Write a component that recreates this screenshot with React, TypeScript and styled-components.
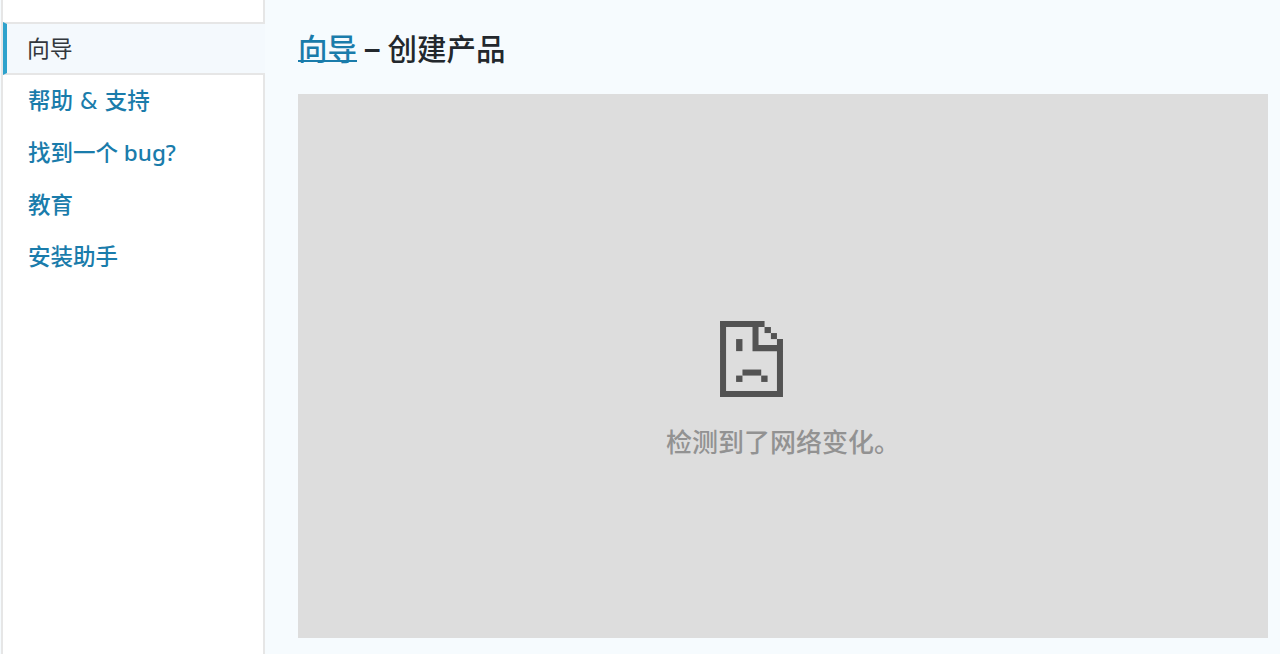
import styled, { createGlobalStyle } from "styled-components";

const GlobalStyle = createGlobalStyle`
  html, body {
    margin: 0;
    height: 100%;
    overflow: hidden;
    background: #f6fbfe;
    font-family: "Noto Sans", "Noto Sans CJK SC", sans-serif;
  }
  #root {
    height: 100%;
  }
`;

const Page = styled.div`
  display: flex;
  height: 654px;
  padding-left: 1px;
`;

const Sidebar = styled.nav`
  display: flex;
  flex-direction: column;
  width: 262px;
  flex-shrink: 0;
  border-left: 2px solid #e6e6e6;
`;

const TopSpacer = styled.div`
  height: 22px;
  flex-shrink: 0;
  box-sizing: border-box;
  background: #fff;
  border-right: 2px solid #e6e6e6;
`;

const ActiveItem = styled.div`
  display: flex;
  align-items: center;
  flex-shrink: 0;
  box-sizing: border-box;
  height: 53px;
  padding: 1px 0 0 20px;
  border-left: 4px solid #2ea2cc;
  border-top: 2px solid #e6e6e6;
  border-bottom: 2px solid #e6e6e6;
  background: #f4f9fd;
  color: #32373c;
  font-size: 22.8px;
  line-height: 1;
`;

const MenuList = styled.div`
  flex: 1;
  display: flex;
  flex-direction: column;
  background: #fff;
  border-right: 2px solid #e6e6e6;
`;

const MenuLink = styled.a`
  display: flex;
  align-items: center;
  height: 52px;
  padding-left: 25px;
  white-space: pre;
  color: #1a7cab;
  font-size: 22.5px;
  font-weight: 500;
  line-height: 1;
`;

const Amp = styled.span`
  margin: 0 1px;
  font-family: "DejaVu Sans", sans-serif;
  font-size: 23px;
`;

const Main = styled.main`
  flex: 1;
  display: flex;
  flex-direction: column;
  padding: 0 12px 16px 33px;
`;

const Title = styled.h1`
  display: flex;
  align-items: center;
  gap: 7px;
  height: 94px;
  margin: 0;
  padding-top: 4px;
  box-sizing: border-box;
  color: #23282d;
  font-size: 29.5px;
  line-height: 1;
  font-weight: 500;
`;

const TitleLink = styled.a`
  color: #1a7cab;
  text-decoration: underline;
  text-underline-offset: 0;
`;

const TitleDash = styled.span`
  font-family: "Liberation Sans", sans-serif;
  font-weight: 700;
`;

const ErrorPanel = styled.section`
  flex: 1;
  display: flex;
  flex-direction: column;
  align-items: center;
  padding-top: 227px;
  background: #dddddd;
`;

const SadFileIcon = styled.svg`
  width: 63px;
  height: 76px;
  margin-right: 63px;
  fill: #535353;
`;

const ErrorText = styled.p`
  margin: 30px 0 0;
  color: #929292;
  font-size: 26px;
  font-weight: 500;
  line-height: 30px;
`;

const SadFile = () => (
  <SadFileIcon viewBox="60 33 188 227">
    <path
      fillRule="evenodd"
      d="M60 33h133v18h-18v54h55v-18h18v173h-188z M78 51v191h152v-119h-73v-72z"
    />
    <rect x="193" y="51" width="19" height="18" />
    <rect x="212" y="69" width="18" height="18" />
    <rect x="108" y="87" width="19" height="36" />
    <rect x="127" y="178" width="56" height="18" />
    <rect x="108" y="196" width="19" height="19" />
    <rect x="183" y="196" width="19" height="19" />
  </SadFileIcon>
);

const App = () => (
  <>
    <GlobalStyle />
    <Page>
      <Sidebar>
        <TopSpacer />
        <ActiveItem>向导</ActiveItem>
        <MenuList>
          <MenuLink>
            帮助 <Amp>&amp;</Amp> 支持
          </MenuLink>
          <MenuLink>找到一个 bug?</MenuLink>
          <MenuLink>教育</MenuLink>
          <MenuLink>安装助手</MenuLink>
        </MenuList>
      </Sidebar>
      <Main>
        <Title>
          <TitleLink>向导</TitleLink>
          <TitleDash>–</TitleDash>
          <span>创建产品</span>
        </Title>
        <ErrorPanel>
          <SadFile />
          <ErrorText>检测到了网络变化。</ErrorText>
        </ErrorPanel>
      </Main>
    </Page>
  </>
);

export default App;
